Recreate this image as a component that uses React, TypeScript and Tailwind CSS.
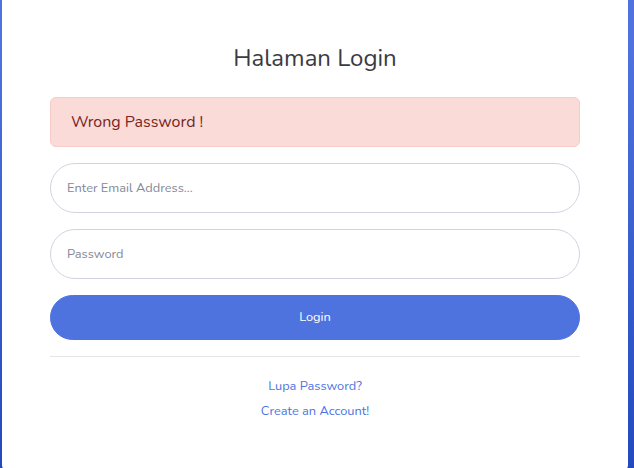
export default function App() {
  return (
    <div
      className="h-[468px] w-[634px] overflow-hidden bg-[linear-gradient(180deg,#4e73df_10%,#224abe_100%)]"
      style={{ fontFamily: 'Nunito, Lato, "Noto Sans", sans-serif' }}
    >
      <div className="ml-[2px] w-[626px] rounded-b-[6px] bg-white px-12 pb-12 pt-[44px]">
        <h1 className="mb-6 text-center text-[24px] font-normal leading-[28.8px] text-[#3a3b45]">
          Halaman Login
        </h1>
        <div className="mb-4 rounded-[6px] border border-[#f8cbc8] bg-[#fadbd8] px-5 py-3 text-[16px] leading-6 text-[#78261f]">
          Wrong Password !
        </div>
        <div className="mb-4">
          <input
            className="block h-[50px] w-full rounded-full border border-[#d1d3e2] bg-white px-4 text-[12.8px] text-[#6e707e] outline-none placeholder:text-[#858796]"
            placeholder="Enter Email Address..."
          />
        </div>
        <div className="mb-4">
          <input
            type="password"
            className="block h-[50px] w-full rounded-full border border-[#d1d3e2] bg-white px-4 text-[12.8px] text-[#6e707e] outline-none placeholder:text-[#858796]"
            placeholder="Password"
          />
        </div>
        <button className="block h-[45px] w-full rounded-full border border-[#4e73df] bg-[#4e73df] text-[12.8px] text-white">
          Login
        </button>
        <hr className="my-4 border-t border-[rgba(0,0,0,0.1)]" />
        <div className="text-center leading-6">
          <a className="text-[12.8px] text-[#4e73df]" href="#">
            Lupa Password?
          </a>
        </div>
        <div className="text-center leading-6">
          <a className="text-[12.8px] text-[#4e73df]" href="#">
            Create an Account!
          </a>
        </div>
      </div>
    </div>
  );
}
